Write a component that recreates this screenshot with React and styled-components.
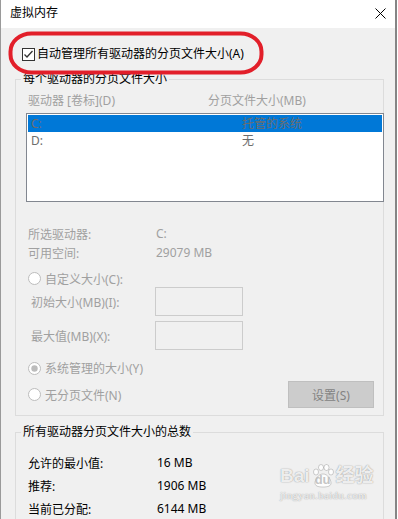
import React from 'react';
import styled, { createGlobalStyle } from 'styled-components';

const GlobalStyle = createGlobalStyle`
    html, body { margin: 0; padding: 0; background: #ffffff; }
    body {
        font-family: "Noto Sans", "Noto Sans CJK SC", sans-serif;
        font-size: 12px;
    }
    * { box-sizing: border-box; }
`

const Screen = styled.div`
    position: relative;
    width: 398px;
    height: 519px;
    overflow: hidden;
    background: #ffffff;
`

const Frame = styled.div`
    width: 397px;
    height: 519px;
    border-left: 1px solid #9a9a9a;
    border-right: 2px solid #858585;
    display: flex;
    flex-direction: column;
`

const TitleBar = styled.div`
    height: 28px;
    flex: none;
    background: #ffffff;
    display: flex;
    align-items: center;
    justify-content: space-between;
    padding: 0 9px 2px 9px;
`

const Title = styled.span`
    font-size: 12px;
    line-height: 16px;
    color: #000;
`

const Body = styled.div`
    flex: 1;
    background: #f0f0f0;
    padding: 18px 0 0 0;
`

const CheckRow = styled.label`
    display: flex;
    align-items: center;
    height: 16px;
    padding-left: 21px;
    gap: 2px;
    color: #000;
    line-height: 16px;
`

const Group = styled.fieldset`
    margin: ${p => p.$top}px 0 0 14px;
    width: 369px;
    padding: 0;
    border: 1px solid #dcdcdc;
    min-width: 0;
`

const Legend = styled.legend`
    margin-left: 5px;
    padding: 0 2px;
    line-height: 16px;
    color: #000;
`

const Inner = styled.div`
    padding: ${p => p.$pad};
`

const Header = styled.div`
    display: grid;
    grid-template-columns: 180px 1fr;
    height: 16px;
    line-height: 16px;
    padding-left: 2px;
    color: #a0a0a0;
`

const List = styled.div`
    margin-top: 4px;
    width: 358px;
    height: 89px;
    background: #ffffff;
    border: 1px solid #828790;
    padding: 1px;
`

const ListRow = styled.div`
    display: grid;
    grid-template-columns: 211px 1fr;
    height: 17px;
    line-height: 17px;
    padding-left: 3px;
    color: #6d6d6d;
    background: ${p => (p.$selected ? '#0078d7' : 'transparent')};
`

const InfoBlock = styled.div`
    margin-top: 22px;
`

const InfoRow = styled.div`
    display: grid;
    grid-template-columns: ${p => p.$col}px 1fr;
    height: ${p => p.$h}px;
    align-items: center;
    padding-left: 2px;
    color: ${p => p.$color};
`

const RadioRow = styled.div`
    display: flex;
    align-items: center;
    gap: 4px;
    height: ${p => p.$h}px;
    margin-top: ${p => p.$top}px;
    padding-left: 2px;
    color: #a0a0a0;
`

const SizeRow = styled.div`
    display: grid;
    grid-template-columns: 124px 88px;
    align-items: center;
    height: 29px;
    margin-top: ${p => p.$top}px;
    padding-left: 5px;
    color: #a0a0a0;
`

const SizeInput = styled.div`
    height: 29px;
    border: 1px solid #cccccc;
    background: #f0f0f0;
`

const BottomRow = styled.div`
    display: flex;
    align-items: center;
    justify-content: space-between;
    height: 27px;
    margin-top: 4px;
    padding: 0 9px 0 2px;
    color: #a0a0a0;
`

const Button = styled.div`
    width: 86px;
    height: 27px;
    display: flex;
    align-items: center;
    justify-content: center;
    background: #cccccc;
    border: 1px solid #bfbfbf;
    color: #838383;
`

const RadioLabel = styled.span`
    display: flex;
    align-items: center;
    gap: 4px;
`

const Annotation = styled.svg`
    position: absolute;
    left: 8px;
    top: 31px;
`

const Watermark = styled.div`
    position: absolute;
    left: 280px;
    top: 464px;
    display: flex;
    flex-direction: column;
    align-items: flex-start;
    color: rgba(255, 255, 255, 0.85);
    text-shadow: 0 0 1px rgba(0, 0, 0, 0.35), 0 0 2px rgba(0, 0, 0, 0.15);
    pointer-events: none;
`

const MarkLine = styled.div`
    display: flex;
    align-items: center;
    font-family: "Liberation Sans", "Noto Sans CJK SC", sans-serif;
    font-weight: bold;
    font-size: 19px;
    line-height: 24px;
`

const MarkSub = styled.div`
    font-family: "Liberation Serif", serif;
    font-size: 11px;
    line-height: 13px;
    letter-spacing: 0.3px;
    margin-top: 1px;
`

const Paw = styled.span`
    position: relative;
    display: inline-flex;
    align-items: flex-end;
    justify-content: center;
    width: 22px;
    height: 24px;
    font-size: 13px;
    line-height: 16px;
    margin: 0 2px;
`

const PawSvg = styled.svg`
    position: absolute;
    left: 0;
    top: 0;
`

const PawText = styled.span`
    position: relative;
    color: rgba(190, 190, 190, 0.9);
    text-shadow: none;
`

function CloseIcon() {
    return (
        <svg width="11" height="11" viewBox="0 0 11 11">
            <path d="M0.5 0.5 L10.5 10.5 M10.5 0.5 L0.5 10.5" stroke="#000" strokeWidth="1" fill="none" />
        </svg>
    )
}

function CheckBox() {
    return (
        <svg width="13" height="13" viewBox="0 0 13 13">
            <rect x="0.5" y="0.5" width="12" height="12" fill="#ffffff" stroke="#333333" />
            <path d="M2.5 6.5 L5 9 L10.5 3" stroke="#333333" strokeWidth="1.3" fill="none" />
        </svg>
    )
}

function Radio({ checked }) {
    return (
        <svg width="13" height="13" viewBox="0 0 13 13">
            <circle cx="6.5" cy="6.5" r="6" fill="#ffffff" stroke="#bcbcbc" />
            {checked && <circle cx="6.5" cy="6.5" r="3.2" fill="#bcbcbc" />}
        </svg>
    )
}

export default function App() {
    return (
        <Screen>
            <GlobalStyle />
            <Frame>
                <TitleBar>
                    <Title>虚拟内存</Title>
                    <CloseIcon />
                </TitleBar>
                <Body>
                    <CheckRow>
                        <CheckBox />
                        <span>自动管理所有驱动器的分页文件大小(A)</span>
                    </CheckRow>

                    <Group $top={9}>
                        <Legend>每个驱动器的分页文件大小</Legend>
                        <Inner $pad="6px 0 7px 10px">
                            <Header>
                                <span>驱动器 [卷标](D)</span>
                                <span>分页文件大小(MB)</span>
                            </Header>
                            <List>
                                <ListRow $selected>
                                    <span>C:</span>
                                    <span>托管的系统</span>
                                </ListRow>
                                <ListRow>
                                    <span>D:</span>
                                    <span>无</span>
                                </ListRow>
                            </List>
                            <InfoBlock>
                                <InfoRow $col={128} $h={19} $color="#a0a0a0">
                                    <span>所选驱动器:</span>
                                    <span>C:</span>
                                </InfoRow>
                                <InfoRow $col={128} $h={19} $color="#a0a0a0">
                                    <span>可用空间:</span>
                                    <span>29079 MB</span>
                                </InfoRow>
                            </InfoBlock>
                            <RadioRow $h={17} $top={8}>
                                <Radio />
                                <span>自定义大小(C):</span>
                            </RadioRow>
                            <SizeRow $top={0}>
                                <span>初始大小(MB)(I):</span>
                                <SizeInput />
                            </SizeRow>
                            <SizeRow $top={5}>
                                <span>最大值(MB)(X):</span>
                                <SizeInput />
                            </SizeRow>
                            <RadioRow $h={18} $top={9}>
                                <Radio checked />
                                <span>系统管理的大小(Y)</span>
                            </RadioRow>
                            <BottomRow>
                                <RadioLabel>
                                    <Radio />
                                    <span>无分页文件(N)</span>
                                </RadioLabel>
                                <Button>设置(S)</Button>
                            </BottomRow>
                        </Inner>
                    </Group>

                    <Group $top={8}>
                        <Legend>所有驱动器分页文件大小的总数</Legend>
                        <Inner $pad="11px 0 0 10px">
                            <InfoRow $col={129} $h={23} $color="#000">
                                <span>允许的最小值:</span>
                                <span>16 MB</span>
                            </InfoRow>
                            <InfoRow $col={129} $h={23} $color="#000">
                                <span>推荐:</span>
                                <span>1906 MB</span>
                            </InfoRow>
                            <InfoRow $col={129} $h={23} $color="#000">
                                <span>当前已分配:</span>
                                <span>6144 MB</span>
                            </InfoRow>
                        </Inner>
                    </Group>
                </Body>
            </Frame>

            <Annotation width="256" height="44" viewBox="0 0 256 44">
                <rect x="2.5" y="2.5" width="251" height="39" rx="21" ry="18" fill="none" stroke="#e21f2a" strokeWidth="4" />
            </Annotation>

            <Watermark>
                <MarkLine>
                    <span>Bai</span>
                    <Paw>
                        <PawSvg width="22" height="24" viewBox="0 0 22 24">
                            <g stroke="rgba(0,0,0,0.18)" strokeWidth="1" fill="rgba(255,255,255,0.85)">
                                <ellipse cx="4" cy="8" rx="2.5" ry="3" />
                                <ellipse cx="9" cy="3.5" rx="2.5" ry="3" />
                                <ellipse cx="14.5" cy="3.5" rx="2.5" ry="3" />
                                <ellipse cx="19" cy="8" rx="2.5" ry="3" />
                                <path d="M11 10 C6 10 3 16 3 19 C3 22 6 23 11 23 C16 23 19 22 19 19 C19 16 16 10 11 10 Z" />
                            </g>
                        </PawSvg>
                        <PawText>du</PawText>
                    </Paw>
                    <span>经验</span>
                </MarkLine>
                <MarkSub>jingyan.baidu.com</MarkSub>
            </Watermark>
        </Screen>
    )
}
